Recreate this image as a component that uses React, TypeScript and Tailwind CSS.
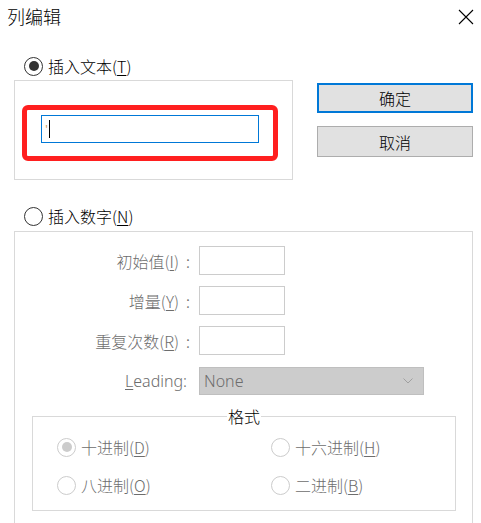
import React from "react";

const cjk = "font-['Noto_Sans_CJK_SC','Noto_Sans',sans-serif] font-light";

const Radio = ({ checked, disabled }: { checked?: boolean; disabled?: boolean }) => (
  <span
    className={`flex h-[19px] w-[19px] shrink-0 items-center justify-center rounded-full border bg-white ${
      disabled ? "border-[#cccccc]" : "border-[#333333]"
    }`}
  >
    {checked && (
      <span className={`h-[10px] w-[10px] rounded-full ${disabled ? "bg-[#cccccc]" : "bg-[#333333]"}`} />
    )}
  </span>
);

const Key = ({ k }: { k: string }) => (
  <>
    (<span className="underline underline-offset-2">{k}</span>)
  </>
);

const NumRow = ({ label, k }: { label: string; k: string }) => (
  <div className="flex h-[29px] items-center">
    <div className="flex w-[184px] justify-end pr-[9px] text-[16px] text-[#6d6d6d]">
      <span>
        {label}
        <Key k={k} />
      </span>
      <span className="ml-[7px]">:</span>
    </div>
    <div className="h-[29px] w-[86px] border border-[#cccccc] bg-white" />
  </div>
);

const FmtRadio = ({ label, k, checked }: { label: string; k: string; checked?: boolean }) => (
  <div className="flex h-[20px] items-center gap-[5px] text-[16px] text-[#6d6d6d]">
    <Radio checked={checked} disabled />
    <span>
      {label}
      <Key k={k} />
    </span>
  </div>
);

export default function App() {
  return (
    <div className={`relative h-[523px] w-[481px] overflow-hidden bg-white text-black ${cjk}`}>
      {/* title bar */}
      <div className="flex h-[40px] items-start justify-between">
        <span className="pl-[7px] pt-[4px] text-[18px] leading-[24px]">列编辑</span>
        <svg className="mr-[7px] mt-[9px]" width="16" height="16" viewBox="0 0 16 16">
          <path d="M1 1 L15 15 M15 1 L1 15" stroke="#000" strokeWidth="1.1" fill="none" />
        </svg>
      </div>

      {/* insert text + buttons */}
      <div className="flex">
        <div className="ml-[14px] w-[279px]">
          <div className="mt-[16px] ml-[10px] flex h-[20px] items-center gap-[5px] text-[16px]">
            <Radio checked />
            <span>
              插入文本
              <Key k="T" />
            </span>
          </div>
          <div className="mt-[4px] h-[100px] w-[279px] border border-[#d9d9d9]">
            <div className="ml-[7px] mt-[24px] h-[56px] w-[256px] rounded-[6px] border-[5px] border-[#ff1f1f]">
              <div className="ml-[14px] mt-[5px] flex h-[28px] w-[218px] items-center border border-[#0078d7] bg-white pl-[3px]">
                <span className="text-[12px] leading-none text-[#c08020]">'</span>
                <span className="ml-[1px] h-[18px] w-[1px] bg-black" />
              </div>
            </div>
          </div>
        </div>

        <div className="ml-[24px] pt-[43px] text-[16px]">
          <div className="flex h-[30px] w-[156px] items-center justify-center border-2 border-[#0078d7] bg-[#e1e1e1]">
            确定
          </div>
          <div className="mt-[13px] flex h-[31px] w-[156px] items-center justify-center border border-[#adadad] bg-[#e1e1e1]">
            取消
          </div>
        </div>
      </div>

      {/* insert number */}
      <div className="mt-[26px] ml-[24px] flex h-[20px] items-center gap-[5px] text-[16px]">
        <Radio />
        <span>
          插入数字
          <Key k="N" />
        </span>
      </div>

      <div className="ml-[14px] mt-[5px] h-[320px] w-[459px] border border-[#d9d9d9]">
        <div className="mt-[14px] flex flex-col gap-[11px]">
          <NumRow label="初始值" k="I" />
          <NumRow label="增量" k="Y" />
          <NumRow label="重复次数" k="R" />
        </div>

        <div className="mt-[12px] flex h-[28px] items-center">
          <div className="w-[184px] pr-[12px] text-right font-['Noto_Sans',sans-serif] text-[16px] text-[#6d6d6d]">
            <span className="underline underline-offset-2">L</span>eading:
          </div>
          <div className="flex h-[28px] w-[225px] items-center justify-between border border-[#bfbfbf] bg-[#cccccc] pl-[4px] pr-[10px] font-['Noto_Sans',sans-serif] text-[16px] text-[#6d6d6d]">
            <span>None</span>
            <svg width="10" height="6" viewBox="0 0 10 6">
              <path d="M0.5 0.5 L5 5 L9.5 0.5" stroke="#a0a0a0" strokeWidth="1" fill="none" />
            </svg>
          </div>
        </div>

        {/* format group */}
        <div className="relative ml-[17px] mt-[21px] h-[95px] w-[424px] border border-[#d9d9d9]">
          <span className="absolute -top-[12px] left-1/2 -translate-x-1/2 bg-white px-[1px] text-[16px] leading-[22px]">
            格式
          </span>
          <div className="ml-[24px] mt-[20px] grid grid-cols-[214px_1fr] gap-y-[18px]">
            <FmtRadio label="十进制" k="D" checked />
            <FmtRadio label="十六进制" k="H" />
            <FmtRadio label="八进制" k="O" />
            <FmtRadio label="二进制" k="B" />
          </div>
        </div>
      </div>
    </div>
  );
}
